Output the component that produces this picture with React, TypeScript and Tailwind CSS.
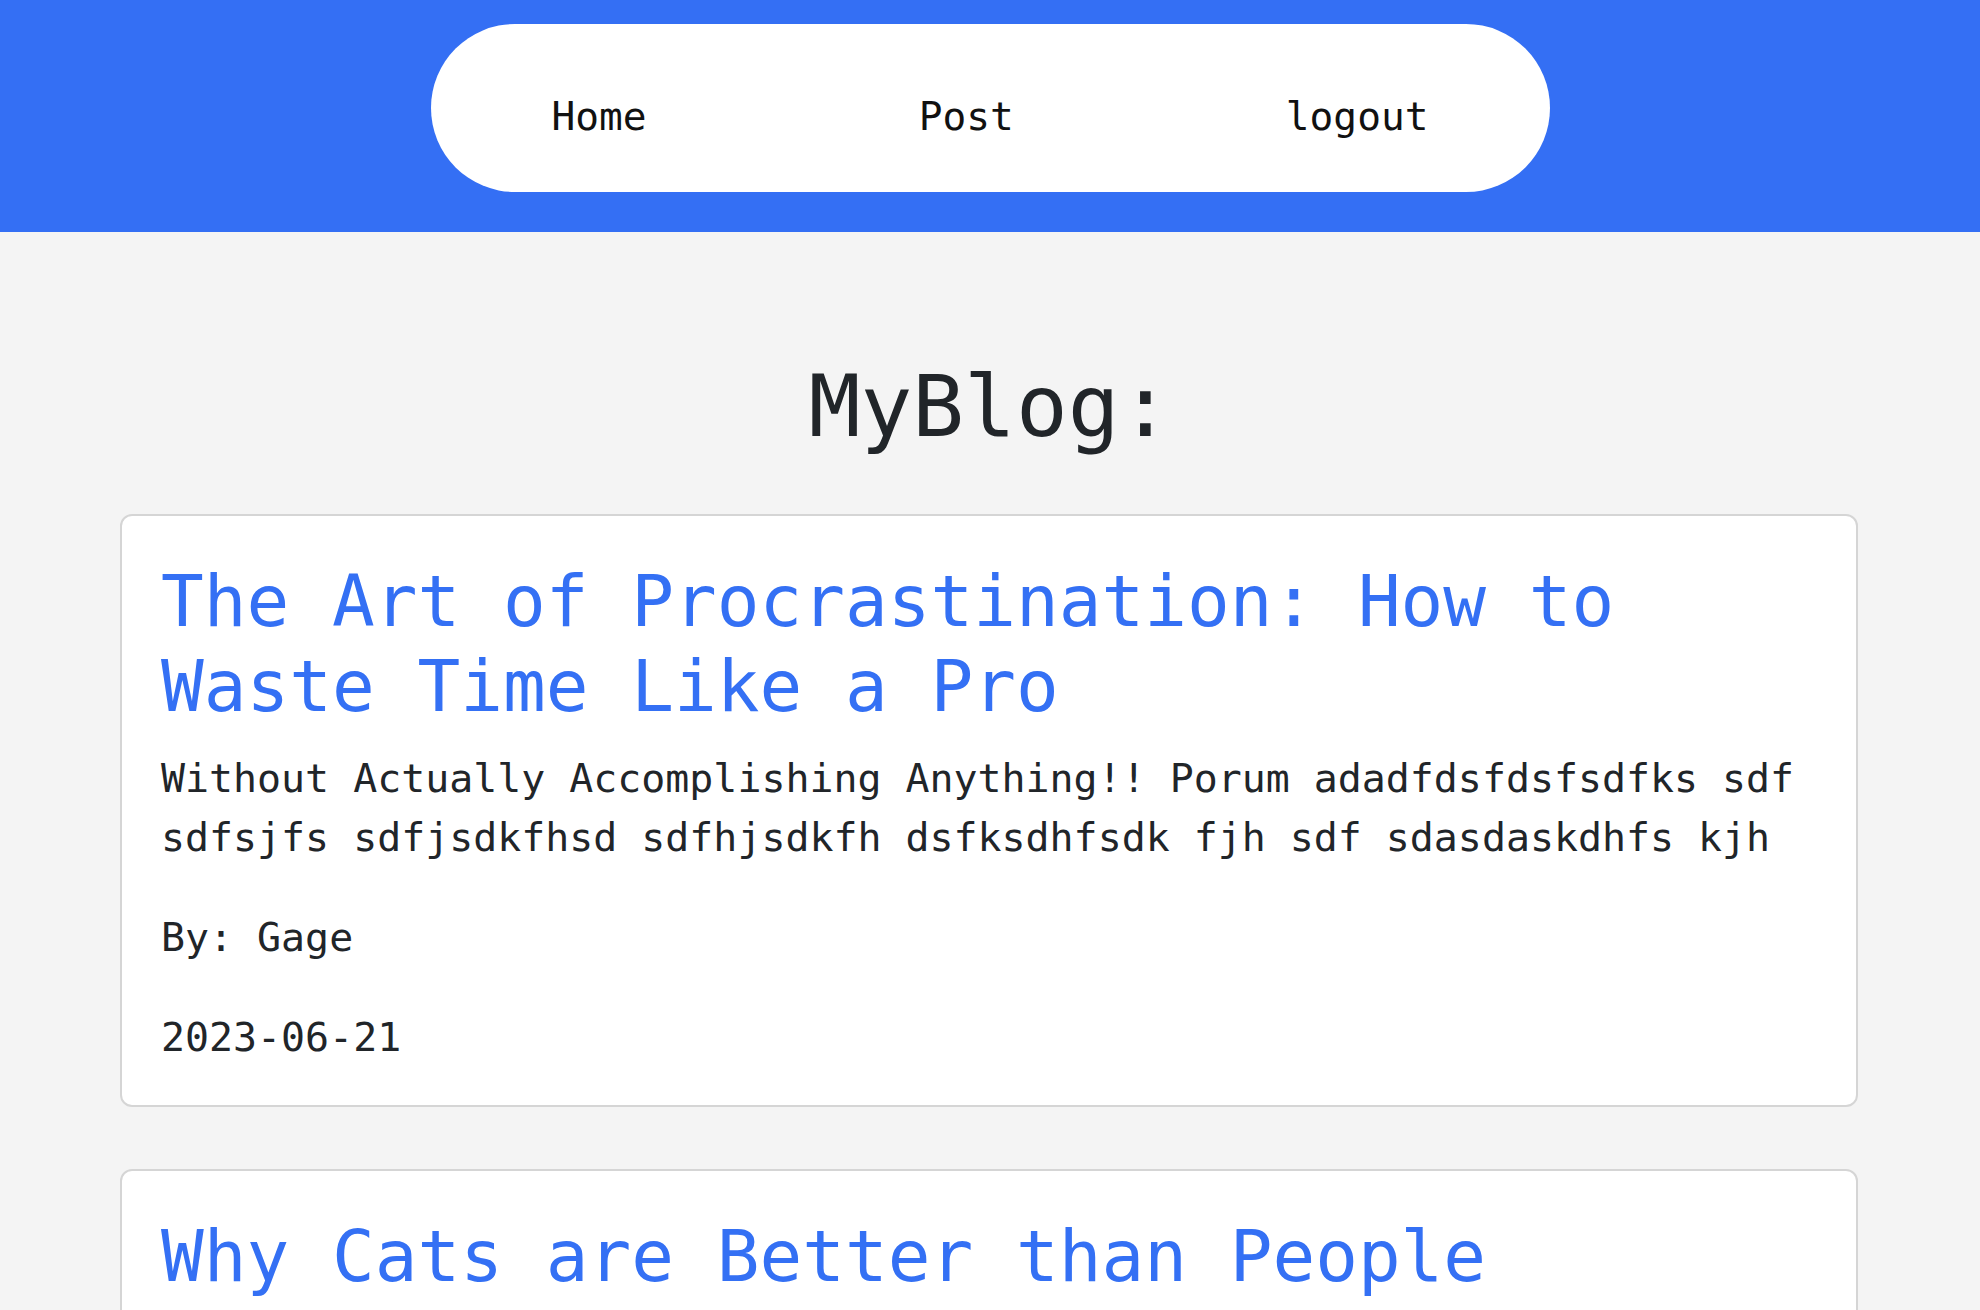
import React from "react";

const mono = { fontFamily: '"DejaVu Sans Mono", "Liberation Mono", monospace' };

type Post = { title: string; body: string; author: string; date: string };

const posts: Post[] = [
  {
    title: "The Art of Procrastination: How to Waste Time Like a Pro",
    body:
      "Without Actually Accomplishing Anything!! Porum adadfdsfdsfsdfks sdf sdfsjfs sdfjsdkfhsd sdfhjsdkfh dsfksdhfsdk fjh sdf sdasdaskdhfs kjh",
    author: "Gage",
    date: "2023-06-21",
  },
  {
    title: "Why Cats are Better than People",
    body: "Cats never ask you how your weekend went, and they never schedule meetings.",
    author: "Gage",
    date: "2023-06-22",
  },
];

function PostCard({ post }: { post: Post }) {
  return (
    <article className="ml-[120px] w-[1738px] rounded-[12px] border-2 border-[#d5d5d5] bg-white pl-[39px] pr-[20px] pt-[43px] pb-[38px]">
      <h2 className="m-0 text-[71px] leading-[85px] font-normal text-[#3470f4]">{post.title}</h2>
      <p className="mt-[20px] mb-0 text-[39.9px] leading-[59px] text-[#212529]">{post.body}</p>
      <p className="mt-[41px] mb-0 text-[39.9px] leading-[59px] text-[#212529]">By: {post.author}</p>
      <p className="mt-[41px] mb-0 text-[39.9px] leading-[59px] text-[#212529]">{post.date}</p>
    </article>
  );
}

export default function App() {
  return (
    <div className="min-h-screen bg-[#f4f4f4]" style={mono}>
      <header className="bg-[#346ff4] pt-[24px] pb-[40px]">
        <nav className="mx-auto flex h-[168px] w-[1119px] items-center justify-between rounded-full bg-white px-[121px] pt-[15px]">
          <a className="text-[39.5px] leading-[60px] text-[#111111]">Home</a>
          <a className="text-[39.5px] leading-[60px] text-[#111111]">Post</a>
          <a className="text-[39.5px] leading-[60px] text-[#111111]">logout</a>
        </nav>
      </header>
      <main className="pb-[60px]">
        <h1 className="mt-[123px] mb-[56px] text-center text-[86px] leading-[103px] font-normal text-[#212529]">
          MyBlog:
        </h1>
        <div className="flex flex-col gap-[62px]">
          {posts.map((p) => (
            <PostCard key={p.title} post={p} />
          ))}
        </div>
      </main>
    </div>
  );
}
